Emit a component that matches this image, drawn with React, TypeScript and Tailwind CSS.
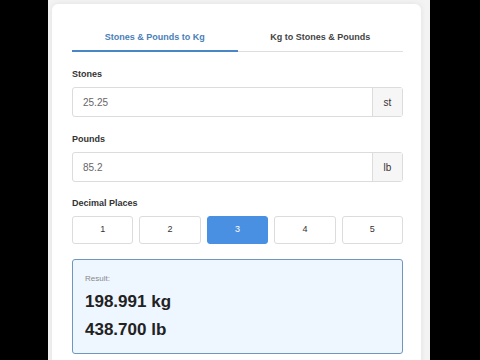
import { useState } from "react";

const font = { fontFamily: '"Liberation Sans", Arial, sans-serif' };

function Field({ label, value, unit, top }: { label: string; value: string; unit: string; top: string }) {
  return (
    <div className={top}>
      <div className="text-[9px] leading-[12px] font-bold text-[#333]">{label}</div>
      <div className="mt-[7px] flex h-[30px] rounded-[3px] border border-[#dcdcdc] bg-white">
        <div className="flex flex-1 items-center pl-[10px] text-[10px] text-[#666]">{value}</div>
        <div className="flex w-[30px] items-center justify-center border-l border-[#dcdcdc] bg-[#f6f6f6] text-[10px] text-[#333]">
          {unit}
        </div>
      </div>
    </div>
  );
}

export default function App() {
  const [tab, setTab] = useState(0);
  const [places, setPlaces] = useState(3);
  const tabs = ["Stones & Pounds to Kg", "Kg to Stones & Pounds"];

  return (
    <div className="flex h-[360px] w-[480px] overflow-hidden bg-black" style={font}>
      <div className="ml-[48px] w-[382px] bg-[#f3f3f3] pl-[4px] pt-[4px]">
        <div className="h-[400px] w-[369px] rounded-[6px] bg-white pl-[20px] pr-[18px] pt-[18px] shadow-[0_0_6px_rgba(0,0,0,0.08)]">
          <div className="flex border-b border-[#dedede]">
            {tabs.map((t, i) => (
              <button
                key={t}
                onClick={() => setTab(i)}
                className={
                  "relative flex-1 pb-[8px] pt-[9px] text-[9px] leading-[12px] font-bold " +
                  (tab === i ? "text-[#4a80b8]" : "text-[#444]")
                }
              >
                {t}
                {tab === i && (
                  <span className="absolute bottom-[-1px] left-0 right-0 h-[2px] bg-[#4a86c5]" />
                )}
              </button>
            ))}
          </div>

          <Field label="Stones" value="25.25" unit="st" top="mt-[16px]" />
          <Field label="Pounds" value="85.2" unit="lb" top="mt-[16px]" />

          <div className="mt-[15px]">
            <div className="text-[9px] leading-[12px] font-bold text-[#333]">Decimal Places</div>
            <div className="mt-[7px] grid grid-cols-5 gap-[6px]">
              {[1, 2, 3, 4, 5].map((n) => (
                <button
                  key={n}
                  onClick={() => setPlaces(n)}
                  className={
                    "h-[28px] rounded-[3px] border text-[9px] " +
                    (places === n
                      ? "border-[#4a90e2] bg-[#4a90e2] text-white"
                      : "border-[#dcdcdc] bg-white text-[#333]")
                  }
                >
                  {n}
                </button>
              ))}
            </div>
          </div>

          <div className="mt-[15px] rounded-[3px] border border-[#6f97bd] bg-[#eef6ff] px-[12px] pb-[13px] pt-[14px]">
            <div className="text-[8px] leading-[10px] text-[#888]">Result:</div>
            <div className="mt-[8px] text-[17px] leading-[20px] font-bold text-[#222]">198.991 kg</div>
            <div className="mt-[8px] text-[17px] leading-[20px] font-bold text-[#222]">438.700 lb</div>
          </div>
        </div>
      </div>
    </div>
  );
}
